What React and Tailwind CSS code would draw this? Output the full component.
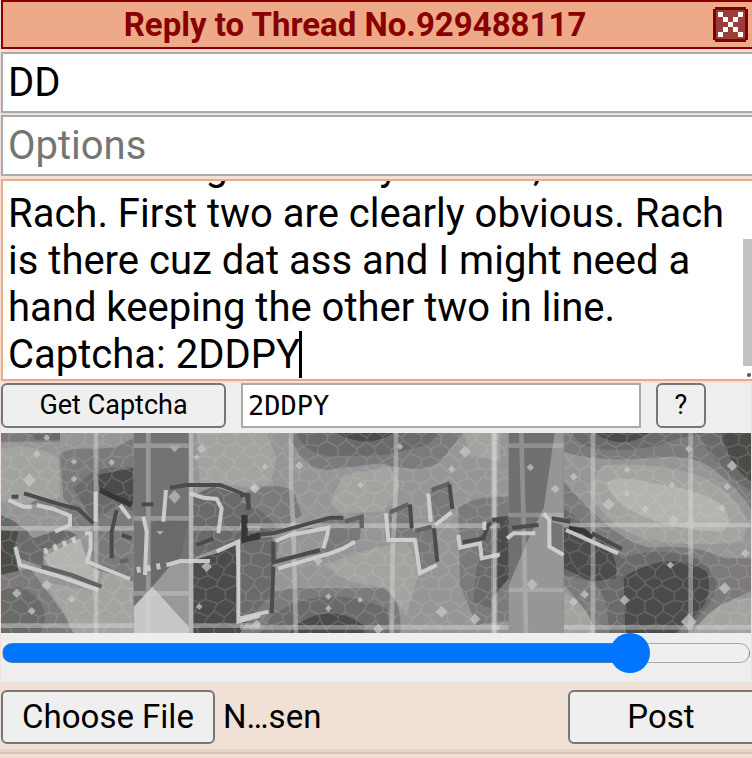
import React, { useEffect, useRef, useState } from 'react';

const COMMENT = `I'd be having Courtney Brooks, Ella and Rach. First two are clearly obvious. Rach is there cuz dat ass and I might need a hand keeping the other two in line.
Captcha: 2DDPY`;

const TONE = {
  black: '#353735',
  dark: '#4b4c4a',
  plum: '#4c4a4c',
  low: '#696b68',
  mid: '#7c7a7c',
  base: '#979597',
  light: '#a2a4a0',
  pale: '#b2b4b0',
  white: '#d4d4d4',
};

// The captcha picture is drawn in three tiles, each with its own origin
const TILES = [
  {
    x: -3,
    blobs: [
      ['light', 'M0 70 Q110 50 175 100 L180 215 Q80 250 0 225Z'],
      ['mid', 'M0 24H180V50H0Z'],
      ['low', 'M90 24H180V44H110Z'],
      ['mid', 'M180 90 Q200 65 290 72 L350 65 L400 40 V470 L280 430 L270 300 L190 220Z'],
      ['low', 'M220 190 L290 130 L400 125 V260 L350 240 L280 290Z'],
      ['dark', 'M290 150 L340 140 L400 130 V240 L300 195Z'],
      ['low', 'M0 270 Q60 290 100 340 L190 310 L230 330 L130 380 L130 430 L60 400 L0 470Z'],
      ['dark', 'M0 310 L55 320 L40 380 L60 450 L0 460Z'],
      ['mid', 'M0 450 L90 430 L200 580 L220 624H0Z'],
      ['low', 'M0 500 Q60 460 120 530 Q150 580 120 624H0Z'],
      ['light', 'M130 470 L290 500 L310 440 L401 470 V624H220 L190 560Z'],
      ['pale', 'M130 395 L240 340 L265 420 L300 440 L290 475 L150 430Z'],
      ['base', 'M110 245 L205 275 L200 310 L110 330Z'],
      ['mid', 'M90 235 L120 220 L240 260 L285 300 L215 310 L210 275Z'],
      ['light', 'M590 24H780V180L760 190L700 180L600 180Z'],
      ['low', 'M580 210 L640 185 L740 215 L740 345 L700 350 L580 400Z'],
      ['mid', 'M740 200H780V300H740Z'],
      ['plum', 'M580 405 L650 385 L705 350 L720 590 L740 624H580Z'],
      ['low', 'M720 350H780V570L720 590Z'],
      ['dark', 'M725 590L780 570V624H735Z'],
    ],
    lines: ['M288 24V624', 'M573 24V624', 'M0 310H401', 'M0 602H401', 'M580 310H780', 'M580 602H780'],
    dark: ['M35 215H55', 'M72 205L180 238L235 252L280 295', 'M350 255L335 320V400', 'M510 188L560 180H660L700 195L740 212L748 250', 'M738 270V340', 'M590 360L640 340', 'M425 238H460', 'M365 330L395 340'],
    soft: ['M125 425L215 450L305 485', 'M360 410L385 405'],
    black: ['M300 195L340 215L395 240', 'M725 345L780 335'],
    white: ['M25 225L70 245H95', 'M110 240L160 252L210 272V300L165 320', 'M46 365L60 420L180 455L295 495', 'M255 325H272V370L262 410L330 438L390 462', 'M287 200V290', 'M498 195L490 290', 'M360 240L390 280', 'M430 275L440 320L435 450', 'M570 205L610 218L650 222L665 250L655 325', 'M500 420L540 408H630', 'M650 380L715 350V590L780 572'],
    dots: ['M132 380L235 340', 'M410 435L500 420'],
    sparks: [[88, 165, 20], [110, 88, 12], [140, 38, 10], [222, 110, 10], [222, 162, 10], [605, 72, 14], [590, 97, 9], [140, 480, 16], [215, 522, 12], [95, 558, 12], [50, 505, 14], [620, 425, 16], [335, 112, 10], [598, 545, 10], [760, 190, 12]],
  },
  {
    x: 717,
    blobs: [
      ['light', 'M0 24H80L110 100L90 180L0 185Z'],
      ['mid', 'M145 24 Q180 130 260 135 L420 115 Q540 150 600 110 L670 24Z'],
      ['low', 'M170 24 Q190 85 280 95 L440 90 L560 60 L600 24Z'],
      ['dark', 'M290 24 Q380 75 460 24Z'],
      ['light', 'M310 150 L450 125 L480 180 L430 260 L300 265 L270 230Z'],
      ['light', 'M250 420 L400 370 L500 350 L540 430 L500 570 L440 490 L330 470Z'],
      ['light', 'M670 24H780V110L690 90Z'],
      ['mid', 'M20 200 Q100 170 160 195 L185 270 L110 320 L0 330V230Z'],
      ['low', 'M0 230 Q90 260 110 315 L0 340Z'],
      ['low', 'M0 345 L100 335 L95 560 L0 585Z'],
      ['mid', 'M100 500 L160 490 H430 Q490 530 480 624H0L20 590Z'],
      ['low', 'M100 570 Q250 470 440 550 L450 624H60Z'],
      ['dark', 'M170 600 Q270 530 370 600 L380 624H150Z'],
      ['mid', 'M655 250 Q700 210 780 220 V590 L710 600 L660 480Z'],
      ['low', 'M720 330 L780 300 V560 L700 530Z'],
    ],
    lines: ['M153 24V180L160 300L168 624', 'M468 24V180L458 380L455 624', 'M765 24V624', 'M0 302H780', 'M0 607H780'],
    glyphs: ['M108 350L270 280H310L320 292L368 275L358 345L270 380L100 410Z', 'M445 262L505 235L520 320L585 300L592 412L540 435L525 335L450 340Z', 'M568 200L630 172L637 250L585 295Z'],
    hollow: ['M115 355L150 335L262 312L250 368L110 400Z'],
    dark: ['M0 210H25V255', 'M30 332L100 325L270 278H310', 'M100 350V412L240 375', 'M100 425L95 565', 'M510 238L515 310', 'M628 178L637 252', 'M582 310L592 410', 'M668 352L730 340L745 300L780 280'],
    soft: ['M315 290L365 275V310', 'M450 262L505 238', 'M575 195L630 175', 'M525 318L575 305'],
    black: ['M12 270V345L60 330'],
    white: ['M108 348L150 330L265 308L262 330L250 370', 'M115 430L270 385L310 370L345 350', 'M0 580L85 560', 'M438 265L445 345H525L540 445L590 420', 'M565 205L572 290', 'M585 300L635 262', 'M655 330L660 368L720 355L725 400L780 388', 'M733 290V315'],
    dots: [],
    sparks: [[675, 80, 18], [605, 560, 18], [705, 582, 16], [178, 122, 13], [362, 180, 10], [360, 525, 9], [265, 515, 10], [265, 550, 10], [635, 132, 11], [45, 190, 16], [75, 125, 10], [50, 598, 14], [235, 408, 14], [415, 612, 16], [480, 65, 10]],
  },
  {
    x: 1473,
    blobs: [
      ['mid', 'M0 215H50V590H0Z'],
      ['dark', 'M0 275H50V460L0 520Z'],
      ['mid', 'M215 24V80 Q300 110 480 100 Q600 85 660 130 Q740 190 780 255V24Z'],
      ['low', 'M240 24 Q260 78 380 75 Q480 75 560 40 L640 24Z'],
      ['dark', 'M310 24 Q390 80 470 24Z'],
      ['low', 'M620 24 Q660 120 780 200V24Z'],
      ['dark', 'M690 24 Q700 110 780 175V24Z'],
      ['light', 'M330 120 Q520 110 640 160 Q740 210 770 300 L750 350 Q600 370 450 340 Q340 300 290 200Z'],
      ['pale', 'M345 170 Q400 150 480 175 Q620 190 690 240 Q730 290 690 320 Q600 320 480 285 Q360 240 345 170Z'],
      ['mid', 'M215 170 Q380 360 480 368 Q600 355 700 400H780V500 Q680 530 600 624H300 Q260 520 215 480Z'],
      ['low', 'M215 250 Q330 330 390 400 Q500 360 610 400 Q700 450 660 520 Q620 590 560 624H350 Q350 500 300 470L215 450Z'],
      ['plum', 'M215 310L330 350 Q385 400 370 460L300 470L215 430Z'],
      ['dark', 'M395 455 Q540 370 645 440 Q665 510 620 560L550 624H400Z'],
      ['plum', 'M480 450 Q580 390 620 460 Q620 550 540 600 Q450 590 480 450Z'],
      ['light', 'M215 500 Q290 540 310 624H215Z'],
      ['light', 'M600 624 Q680 510 780 520V624Z'],
    ],
    lines: ['M5 24V624', 'M303 24V624', 'M596 24V624', 'M215 300H780', 'M0 607H50', 'M215 607H780'],
    dark: ['M0 285L45 280', 'M60 308L140 300', 'M35 310V370', 'M180 280L235 290', 'M300 325L390 372'],
    soft: [],
    black: ['M230 310L275 318L300 340'],
    white: ['M222 315L300 350L378 385', 'M155 265L172 285V365L215 390', 'M45 340L65 325H130', 'M0 392H20'],
    dots: [],
    sparks: [[350, 238, 18], [545, 285, 16], [398, 525, 15], [698, 490, 18], [720, 122, 16], [705, 185, 11], [590, 72, 11], [120, 478, 17], [190, 192, 13], [115, 127, 11], [590, 590, 24], [278, 508, 13], [245, 155, 12], [405, 135, 10], [405, 207, 10], [460, 252, 12], [540, 180, 11], [760, 385, 13], [535, 420, 11], [690, 250, 11], [596, 295, 16], [245, 530, 14]],
  },
];

// Uneven honeycomb laid over the background
const buildMesh = () => {
  const w = 28;
  const h = 36;
  const jitter = (a, b, s) => ((Math.abs(Math.sin(a * 12.9898 + b * 78.233 + s) * 43758.5453) % 1) - 0.5) * 14;
  const point = (c, r) => {
    const shift = (c + r) % 2 ? 8 : -8;
    return `${Math.round(c * w + jitter(c, r, 1))} ${Math.round(r * h + shift + jitter(c, r, 5))}`;
  };
  let d = '';
  for (let r = 0; r < 18; r++) {
    d += `M${point(0, r)}`;
    for (let c = 1; c < 83; c++) d += `L${point(c, r)}`;
    for (let c = 0; c < 83; c++) {
      if ((c + r) % 2) d += `M${point(c, r)}L${point(c, r + 1)}`;
    }
  }
  return d;
};

const MESH = buildMesh();

const spark = ([x, y, r]) => `M${x} ${y - r}L${x + r / 2} ${y - r / 2}L${x + r} ${y}L${x + r / 2} ${y + r / 2}L${x} ${y + r}L${x - r / 2} ${y + r / 2}L${x - r} ${y}L${x - r / 2} ${y - r / 2}Z`;

const CaptchaImage = () => (
  <svg
    role="img"
    aria-label="Captcha challenge"
    viewBox="0 0 2250 600"
    preserveAspectRatio="none"
    className="block h-[200px] w-full"
  >
    <rect width="2250" height="600" fill={TONE.base} />
    {TILES.map((tile) => (
      <g key={tile.x} transform={`translate(${tile.x} -24)`}>
        {tile.blobs.map(([tone, d]) => (
          <path key={d} d={d} fill={TONE[tone]} />
        ))}
        {tile.glyphs?.map((d) => (
          <path key={d} d={d} fill="#7a787b" />
        ))}
        {tile.hollow?.map((d) => (
          <path key={d} d={d} fill={TONE.base} />
        ))}
      </g>
    ))}
    <path d={MESH} fill="none" stroke="#d8dcd8" strokeOpacity="0.17" strokeWidth="5" />

    {/* Flat bands */}
    <g transform="translate(-3 -24)">
      <path d="M401 24H567V624H401Z" fill="#737373" />
      <path d="M490 280L566 290L540 400L457 485L440 450V300Z" fill="#6a6a6a" />
      <path d="M457 485L520 412H567V605Z" fill="#999" />
      <path d="M457 485L401 545V624H567V605Z" fill="#c6c6c6" />
      <path d="M401 62H566M401 280H566M401 505H566M445 24V624" fill="none" stroke="#d8d8d8" strokeOpacity="0.36" strokeWidth="14" />
      <path d="M505 62H542L524 82ZM505 215L524 196L542 215L524 236ZM468 318H492L480 330Z" fill="#aaa" />
    </g>
    <g transform="translate(1473 -24)">
      <path d="M50 24H215V624H50Z" fill="#707070" />
      <path d="M188 24H215V624H50V480L110 340L155 250Z" fill="#969696" />
      <path d="M175 290L212 300V380L180 365Z" fill="#757575" />
      <path d="M50 62H215M50 270H215M50 495H215M88 24L95 300L102 624" fill="none" stroke="#d8d8d8" strokeOpacity="0.3" strokeWidth="14" />
    </g>

    {TILES.map((tile) => (
      <g key={tile.x} transform={`translate(${tile.x} -24)`} fill="none">
        {tile.lines.map((d) => (
          <path key={d} d={d} stroke="#dcdedc" strokeOpacity="0.42" strokeWidth="14" />
        ))}
        {tile.soft.map((d) => (
          <path key={d} d={d} stroke="#636363" strokeWidth="13" />
        ))}
        {tile.dark.map((d) => (
          <path key={d} d={d} stroke={TONE.dark} strokeWidth="12" />
        ))}
        {tile.black.map((d) => (
          <path key={d} d={d} stroke={TONE.black} strokeWidth="16" />
        ))}
        {tile.white.map((d) => (
          <path key={d} d={d} stroke={TONE.white} strokeOpacity="0.9" strokeWidth="12" />
        ))}
        {tile.dots.map((d) => (
          <path key={d} d={d} stroke={TONE.white} strokeOpacity="0.85" strokeWidth="18" strokeDasharray="12 18" />
        ))}
        {tile.sparks.map((s) => (
          <path key={`${s[0]}-${s[1]}`} d={spark(s)} fill="#c6c8c6" fillOpacity="0.75" />
        ))}
      </g>
    ))}
  </svg>
);

const CloseIcon = () => (
  <svg viewBox="0 0 35 35" className="block h-[35px] w-[35px]" aria-hidden="true">
    <path d="M2 0H33V2H35V33H33V35H2V33H0V2H2Z" fill="#800000" />
    <path d="M3 3H32V32H3Z" fill="#9b3d38" />
    <path
      d="M5 5h5v5h5v5h5v-5h5v-5h5v5h-5v5h-5v5h5v5h5v5h-5v-5h-5v-5h-5v5h-5v5h-5v-5h5v-5h5v-5h-5v-5h-5z"
      fill="#fff"
    />
  </svg>
);

const App = () => {
  const [name, setName] = useState('DD');
  const [options, setOptions] = useState('');
  const [comment, setComment] = useState(COMMENT);
  const [answer, setAnswer] = useState('2DDPY');
  const [offset, setOffset] = useState(86);
  const commentRef = useRef(null);

  // Keep the last line of the comment in view
  useEffect(() => {
    commentRef.current.scrollTop = commentRef.current.scrollHeight;
  }, [comment]);

  return (
    <div className="min-h-screen overflow-hidden bg-[#f0e0d6] font-['Roboto',sans-serif] text-black">
      <form className="pl-px" onSubmit={(e) => e.preventDefault()}>
        <div className="-mr-2">
          <header className="flex h-[49px] items-center border-2 border-[#880000] bg-[#eeaa88] pr-2.5">
            <h1 className="flex-1 pr-1.5 text-center text-[33px] leading-[43px] font-bold text-[#880000]">
              Reply to Thread No.929488117
            </h1>
            <button type="button" aria-label="Close">
              <CloseIcon />
            </button>
          </header>

          <div className="mt-[3px] flex flex-col gap-0.5">
            <input
              type="text"
              aria-label="Name"
              value={name}
              onChange={(e) => setName(e.target.value)}
              className="h-[61px] w-full border-2 border-[#aaaaaa] bg-white px-[5px] text-[40px] leading-[47px] outline-none"
            />
            <input
              type="text"
              aria-label="Options"
              placeholder="Options"
              value={options}
              onChange={(e) => setOptions(e.target.value)}
              className="h-[61px] w-full border-2 border-[#aaaaaa] bg-white px-[5px] text-[40px] leading-[47px] outline-none placeholder:text-[#757575]"
            />
          </div>

          <div className="relative mt-[3px]">
            <textarea
              ref={commentRef}
              aria-label="Comment"
              value={comment}
              onChange={(e) => setComment(e.target.value)}
              className="block h-[202px] w-full resize-none overflow-hidden border-2 border-[#eeaa88] bg-white py-px pr-4 pl-[5px] text-[40px] leading-[47px] outline-none"
            />
            {/* Caret, scroll thumb and resize dot */}
            <span className="absolute bottom-[3px] left-[298px] h-[47px] w-[3px] bg-black" />
            <span className="absolute right-2 bottom-[15px] h-[127px] w-[9px] bg-[#c1c1c1]" />
            <span className="absolute right-[9px] bottom-1 size-1 rounded-full bg-[#555555]" />
          </div>
        </div>

        <section className="mr-px mt-0.5 bg-[#eeeeee] pb-[9px]">
          <div className="flex gap-[15px] pb-[5px]">
            <button
              type="button"
              className="h-[45px] w-[225px] rounded-md border-2 border-[#767676] bg-[#efefef] text-[27px]"
            >
              Get Captcha
            </button>
            <input
              type="text"
              aria-label="Captcha answer"
              value={answer}
              onChange={(e) => setAnswer(e.target.value)}
              className="h-[45px] w-[400px] border-2 border-[#aaaaaa] bg-white px-[5px] font-['DejaVu_Sans_Mono',monospace] text-[27px] outline-none"
            />
            <button
              type="button"
              aria-label="Captcha help"
              className="h-[45px] w-[50px] rounded-md border-2 border-[#767676] bg-[#efefef] text-[27px]"
            >
              ?
            </button>
          </div>
          <CaptchaImage />
          <input
            type="range"
            aria-label="Captcha position"
            min="0"
            max="100"
            step="any"
            value={offset}
            onChange={(e) => setOffset(Number(e.target.value))}
            style={{ '--fill': `${offset}%` }}
            className="block h-10 w-full appearance-none bg-transparent px-px outline-none [&::-webkit-slider-runnable-track]:h-5 [&::-webkit-slider-runnable-track]:rounded-full [&::-webkit-slider-runnable-track]:border [&::-webkit-slider-runnable-track]:border-[#7f7f7f]/60 [&::-webkit-slider-runnable-track]:bg-[linear-gradient(to_right,#0075ff_var(--fill),#efefef_var(--fill))] [&::-webkit-slider-thumb]:-mt-[11px] [&::-webkit-slider-thumb]:size-10 [&::-webkit-slider-thumb]:appearance-none [&::-webkit-slider-thumb]:rounded-full [&::-webkit-slider-thumb]:bg-[#0075ff]"
          />
        </section>

        <div className="-mr-2 mt-2 flex items-center">
          <input type="file" id="upload" className="peer sr-only" />
          <label
            htmlFor="upload"
            className="flex h-[54px] w-[214px] items-center justify-center rounded-md border-2 border-[#767676] bg-[#efefef] text-[33px]"
          >
            Choose File
          </label>
          <span className="ml-2 text-[33px]">N…sen</span>
          <button
            type="submit"
            className="ml-auto h-[54px] w-[192px] rounded-md border-2 border-[#767676] bg-[#efefef] pr-1.5 text-[33px]"
          >
            Post
          </button>
        </div>
      </form>
      <div className="mt-[5px] h-[5px] border-t-[3px] border-b-2 border-t-[#e9d4c9] border-b-[#d9bfb7]" />
    </div>
  );
};

export default App;
